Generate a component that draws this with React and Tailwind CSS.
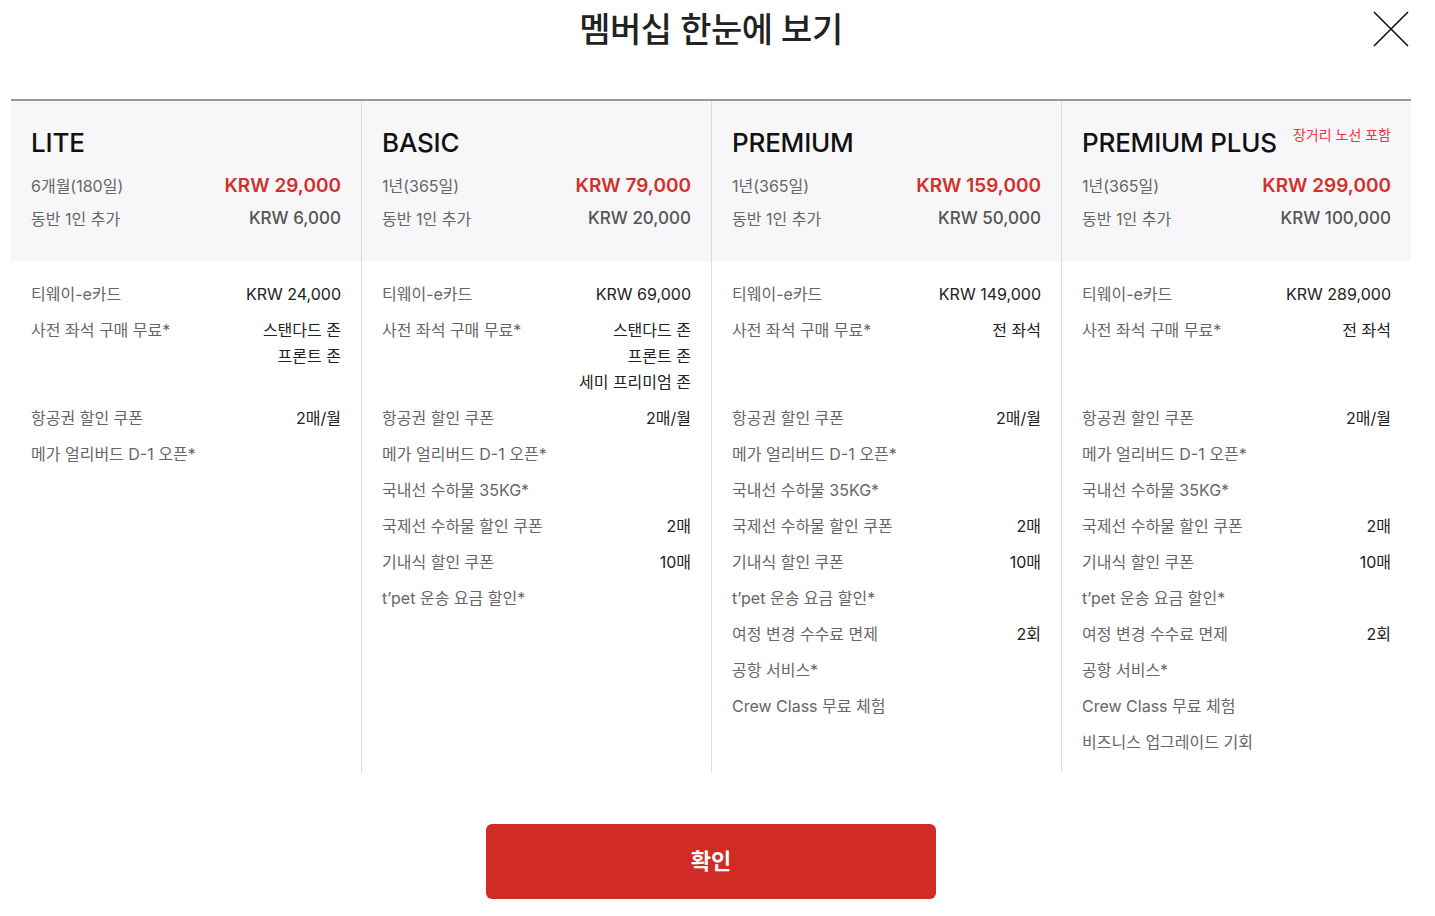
const plans = [
  {
    name: 'LITE',
    period: '6개월(180일)',
    price: 'KRW 29,000',
    companion: 'KRW 6,000',
    rows: [
      ['티웨이-e카드', 'KRW 24,000'],
      ['사전 좌석 구매 무료*', ['스탠다드 존', '프론트 존']],
      ['항공권 할인 쿠폰', '2매/월'],
      ['메가 얼리버드 D-1 오픈*', ''],
    ],
  },
  {
    name: 'BASIC',
    period: '1년(365일)',
    price: 'KRW 79,000',
    companion: 'KRW 20,000',
    rows: [
      ['티웨이-e카드', 'KRW 69,000'],
      ['사전 좌석 구매 무료*', ['스탠다드 존', '프론트 존', '세미 프리미엄 존']],
      ['항공권 할인 쿠폰', '2매/월'],
      ['메가 얼리버드 D-1 오픈*', ''],
      ['국내선 수하물 35KG*', ''],
      ['국제선 수하물 할인 쿠폰', '2매'],
      ['기내식 할인 쿠폰', '10매'],
      ['t’pet 운송 요금 할인*', ''],
    ],
  },
  {
    name: 'PREMIUM',
    period: '1년(365일)',
    price: 'KRW 159,000',
    companion: 'KRW 50,000',
    rows: [
      ['티웨이-e카드', 'KRW 149,000'],
      ['사전 좌석 구매 무료*', ['전 좌석']],
      ['항공권 할인 쿠폰', '2매/월'],
      ['메가 얼리버드 D-1 오픈*', ''],
      ['국내선 수하물 35KG*', ''],
      ['국제선 수하물 할인 쿠폰', '2매'],
      ['기내식 할인 쿠폰', '10매'],
      ['t’pet 운송 요금 할인*', ''],
      ['여정 변경 수수료 면제', '2회'],
      ['공항 서비스*', ''],
      ['Crew Class 무료 체험', ''],
    ],
  },
  {
    name: 'PREMIUM PLUS',
    badge: '장거리 노선 포함',
    period: '1년(365일)',
    price: 'KRW 299,000',
    companion: 'KRW 100,000',
    rows: [
      ['티웨이-e카드', 'KRW 289,000'],
      ['사전 좌석 구매 무료*', ['전 좌석']],
      ['항공권 할인 쿠폰', '2매/월'],
      ['메가 얼리버드 D-1 오픈*', ''],
      ['국내선 수하물 35KG*', ''],
      ['국제선 수하물 할인 쿠폰', '2매'],
      ['기내식 할인 쿠폰', '10매'],
      ['t’pet 운송 요금 할인*', ''],
      ['여정 변경 수수료 면제', '2회'],
      ['공항 서비스*', ''],
      ['Crew Class 무료 체험', ''],
      ['비즈니스 업그레이드 기회', ''],
    ],
  },
];

function PlanColumn({ plan, first }) {
  return (
    <div className={`flex flex-col ${first ? '' : 'border-l border-[#dcdcdc]'}`}>
      <div className="bg-[#f7f7f9] h-[160px] px-[20px] pt-[25px]">
        <div className="flex items-start justify-between">
          <h3 className="text-[26px] leading-[34px] font-medium text-[#111] tracking-[-0.2px]">{plan.name}</h3>
          {plan.badge && (
            <span className="text-[14px] leading-[16px] text-[#f5333f] mt-[1px]">{plan.badge}</span>
          )}
        </div>
        <div className="flex items-center justify-between mt-[11px] h-[30px]">
          <span className="text-[16px] text-[#666]">{plan.period}</span>
          <span className="text-[19px] font-semibold text-[#d3302b]">{plan.price}</span>
        </div>
        <div className="flex items-center justify-between h-[36px]">
          <span className="text-[16px] text-[#666]">동반 1인 추가</span>
          <span className="text-[17px] font-medium text-[#555]">{plan.companion}</span>
        </div>
      </div>
      <div className="px-[20px] pt-[15px] pb-[12px]">
        {plan.rows.map(([label, value], i) => (
          <div
            key={i}
            className={`flex justify-between py-[5px] text-[16px] leading-[26px] ${i === 1 ? 'h-[88px]' : 'h-[36px]'}`}
          >
            <span className="text-[#666]">{label}</span>
            <span className="text-[#222] text-right flex flex-col">
              {Array.isArray(value) ? value.map((v) => <span key={v}>{v}</span>) : value}
            </span>
          </div>
        ))}
      </div>
    </div>
  );
}

export default function App() {
  return (
    <div
      className="w-[1435px] h-[916px] bg-white relative"
      style={{ fontFamily: 'Inter, "Noto Sans CJK KR", sans-serif' }}
    >
      <button className="absolute left-[1373px] top-[11px] w-[36px] h-[36px]">
        <svg viewBox="0 0 36 36" className="w-[36px] h-[36px]">
          <path d="M1 1 L35 35 M35 1 L1 35" stroke="#111" strokeWidth="1.6" fill="none" />
        </svg>
      </button>
      <div className="w-[1422px]">
        <h2 className="pt-[2px] text-center text-[34px] leading-[56px] font-medium text-[#222] tracking-[-0.5px]">
          멤버십 한눈에 보기
        </h2>
        <div className="ml-[11px] w-[1400px] mt-[41px] border-t-2 border-[#999] grid grid-cols-4">
          {plans.map((p, i) => (
            <PlanColumn key={p.name} plan={p} first={i === 0} />
          ))}
        </div>
        <div className="flex justify-center mt-[52px]">
          <button className="w-[450px] h-[75px] rounded-[6px] bg-[#d12b26] text-white text-[22px] font-bold">
            확인
          </button>
        </div>
      </div>
    </div>
  );
}
